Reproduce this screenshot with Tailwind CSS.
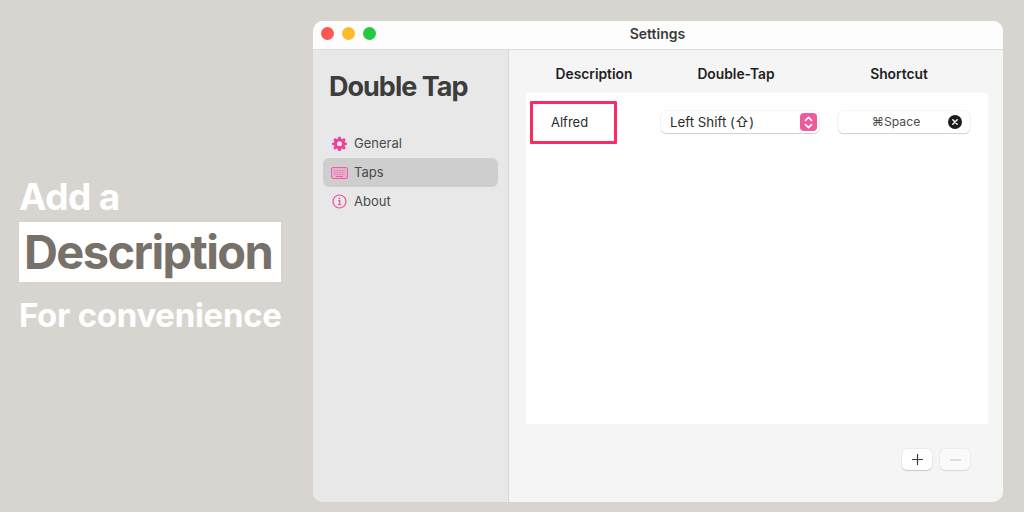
<!DOCTYPE html>
<html lang="en">
	<head>
		<meta charset="UTF-8" />
		<title>Double Tap</title>
		<script src="https://cdn.jsdelivr.net/npm/@tailwindcss/browser@4"></script>
	</head>
	<body class="bg-[#d8d5d0] font-['Inter',sans-serif] w-[1024px] h-[512px] overflow-hidden">
		<div class="flex h-[512px]">
			<!-- left caption -->
			<div class="w-[313px] shrink-0 pl-[19px] pt-[175px]">
				<div class="text-[37px] leading-[44px] font-bold text-white tracking-[-0.6px]">Add a</div>
				<div class="mt-[3px] w-[262px] h-[60px] bg-white pl-[5px] flex items-center text-[#78716a] text-[47px] font-bold tracking-[-1.6px]">Description</div>
				<div class="mt-[11px] text-[33px] leading-[44px] font-bold text-white whitespace-nowrap tracking-[-0.3px]">For convenience</div>
			</div>

			<!-- settings window -->
			<div class="mt-[21px] w-[690px] h-[481px] rounded-[10px] overflow-hidden bg-[#f5f5f5] flex flex-col">
				<div class="relative h-[28px] shrink-0 bg-[#fdfdfd] border-b border-[#dcdcdc] flex items-center justify-center box-content">
					<div class="absolute left-[8px] top-[6px] flex gap-[8px]">
						<div class="w-[13px] h-[13px] rounded-full bg-[#fc5753]"></div>
						<div class="w-[13px] h-[13px] rounded-full bg-[#fdbc2e]"></div>
						<div class="w-[13px] h-[13px] rounded-full bg-[#27c83f]"></div>
					</div>
					<span class="-mt-[3px] -ml-[1px] text-[14px] font-semibold text-[#3a3a3a]">Settings</span>
				</div>
				<div class="flex flex-1">
					<!-- sidebar -->
					<div class="w-[196px] shrink-0 bg-[#e8e8e8] border-r border-[#d6d6d6] px-[10px]">
						<div class="pl-[6px] mt-[19px] text-[27px] leading-[36px] font-bold text-[#3c3c3c] tracking-[-1px]">Double Tap</div>
						<div class="mt-[24px] flex flex-col text-[13px] text-[#4a4a4a]">
							<div class="h-[29px] flex items-center gap-[7px] pl-[9px]">
								<svg class="w-[15px] h-[15px]" viewBox="0 0 24 24" fill="#ef3f96"><path fill-rule="evenodd" d="M10 1h4l.6 3.200 1.900.8L19.200 3.100 22 5.900l-1.900 2.700.8 1.900L24 11v3l-3.100.6-.8 1.900 1.900 2.700-2.800 2.800-2.700-1.900-1.900.8L14 24h-4l-.6-3.100-1.900-.8-2.700 1.900L2 19.200l1.900-2.700-.8-1.900L0 14v-3l3.100-.5.8-1.900L2 5.900l2.800-2.800 2.700 1.900 1.900-.8L10 1zm2 7.500a4 4 0 1 0 0 8 4 4 0 0 0 0-8z"/></svg>
								<span>General</span>
							</div>
							<div class="h-[29px] flex items-center gap-[6px] pl-[8px] rounded-[6px] bg-[#cecece]">
								<svg class="w-[17px] h-[12px]" viewBox="0 0 17 12" fill="none" stroke="#ee5fa3"><rect x="0.500" y="0.500" width="16" height="11" rx="1.500" fill="#e3b3cb"/><path d="M3 3.500h11M3 5.500h11M3 7.500h11" stroke-width="1" stroke-dasharray="1 .6" opacity=".75"/><path d="M5 9.500h7" stroke-width="1"/></svg>
								<span>Taps</span>
							</div>
							<div class="h-[29px] flex items-center gap-[7px] pl-[9px]">
								<svg class="w-[15px] h-[15px]" viewBox="0 0 15 15" fill="none" stroke="#ee4f9c" stroke-width="1.200"><circle cx="7.500" cy="7.500" r="6.500"/><path d="M6.300 6.700h1.400v3.600M6 10.500h3.200"/><circle cx="7.500" cy="4.400" r=".9" fill="#ee4f9c" stroke="none"/></svg>
								<span>About</span>
							</div>
						</div>
					</div>

					<!-- table pane -->
					<div class="flex-1 px-[17px] flex flex-col">
						<div class="h-[43px] text-[13.8px] font-semibold text-[#1f1f1f]">
							<div class="flex items-center h-[48px]">
								<span class="w-[136px] text-center">Description</span>
								<span class="w-[148px] text-center">Double-Tap</span>
								<span class="w-[178px] text-center">Shortcut</span>
							</div>
						</div>
						<div class="h-[331px] bg-white">
							<div class="flex items-start">
								<!-- highlighted cell -->
								<div class="ml-[4px] mt-[8px] w-[87px] h-[43px] border-[3px] border-[#fb2a62] rounded-[1px] flex items-center pl-[18px] text-[13px] text-[#2b2b2b]">Alfred</div>
								<!-- select -->
								<div class="ml-[44px] mt-[18px] w-[158px] h-[22px] bg-white rounded-[5px] shadow-[0_0_0_0.5px_rgba(0,0,0,0.08),0_1px_1px_rgba(0,0,0,0.15)] flex items-center justify-between pl-[9px] pr-[2px] text-[13.300px] text-[#2b2b2b]">
									<span>Left Shift (<span class="text-[14px]">⇧</span>)</span>
									<div class="w-[17px] h-[18px] rounded-[4px] bg-[#ee5a9e] flex items-center justify-center">
										<svg class="w-[9px] h-[13px]" viewBox="0 0 8 12" fill="none" stroke="white" stroke-width="1.600" stroke-linecap="round" stroke-linejoin="round"><path d="M1.200 4 4 1.300 6.800 4M1.200 8 4 10.700 6.800 8"/></svg>
									</div>
								</div>
								<!-- shortcut -->
								<div class="ml-[19px] mt-[18px] w-[132px] h-[22px] bg-white rounded-[5px] shadow-[0_0_0_0.5px_rgba(0,0,0,0.08),0_1px_1px_rgba(0,0,0,0.15)] relative flex items-center justify-center pr-[16px] text-[12.200px] text-[#4a4a4a]">
									<span>⌘Space</span>
									<div class="absolute right-[8px] top-[4px] w-[14px] h-[14px] rounded-full bg-[#1c1c1c] flex items-center justify-center">
										<svg class="w-[6px] h-[6px]" viewBox="0 0 6 6" stroke="white" stroke-width="1.400" stroke-linecap="round"><path d="M.8.8l4.400 4.400M5.200.8.8 5.200"/></svg>
									</div>
								</div>
							</div>
						</div>
						<!-- add / remove -->
						<div class="mt-[25px] flex justify-end gap-[8px] pr-[18px]">
							<div class="w-[30px] h-[21px] rounded-[5px] bg-white shadow-[0_0_0_0.5px_rgba(0,0,0,0.08),0_1px_1px_rgba(0,0,0,0.15)] flex items-center justify-center">
								<svg class="w-[11px] h-[11px]" viewBox="0 0 11 11" stroke="#3c3c3c" stroke-width="1.200"><path d="M5.500 0v11M0 5.500h11"/></svg>
							</div>
							<div class="w-[30px] h-[21px] rounded-[5px] bg-[#fafafa] shadow-[0_0_0_0.5px_rgba(0,0,0,0.06),0_0.5px_1px_rgba(0,0,0,0.08)] flex items-center justify-center">
								<svg class="w-[11px] h-[2px]" viewBox="0 0 11 2" stroke="#c4c4c4" stroke-width="1.200"><path d="M0 1h11"/></svg>
							</div>
						</div>
					</div>
				</div>
			</div>
		</div>
	</body>
</html>
